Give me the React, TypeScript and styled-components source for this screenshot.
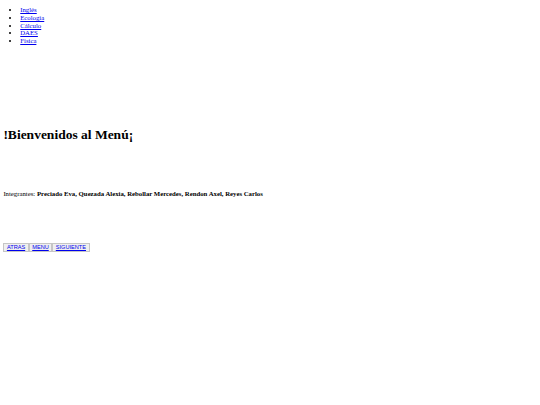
import styled, { createGlobalStyle } from 'styled-components';

// the page was captured at 1280px wide and shrunk to 540px
const S = 0.421875;
const px = (n: number) => `${(n * S).toFixed(2)}px`;

const GlobalStyle = createGlobalStyle`
  html, body {
    margin: 0;
    padding: 0;
    background: #ffffff;
  }

  body {
    padding: ${px(8)};
    font-family: 'Liberation Serif', 'Times New Roman', serif;
    font-size: ${px(16)};
    color: #000000;
  }
`;

const Page = styled.div`
  display: flex;
  flex-direction: column;
  align-items: flex-start;
`;

const SubjectList = styled.ul`
  margin: ${px(7)} 0 0;
  padding-left: ${px(40)};
  line-height: ${px(18.2)};
  list-style: disc;
`;

const SubjectLink = styled.a`
  color: #0000ee;
  text-decoration: underline;
`;

const Title = styled.h1`
  margin: 82.6px 0 0;
  font-size: ${px(32)};
  line-height: ${px(37)};
  font-weight: bold;
`;

const Members = styled.p`
  margin: 46.6px 0 0;
  line-height: ${px(18.4)};
`;

const ButtonRow = styled.div`
  display: flex;
  margin-top: 45.4px;
`;

const NavButton = styled.button`
  display: inline-flex;
  align-items: center;
  margin: 0;
  padding: ${px(1)} ${px(6)};
  height: ${px(21)};
  background: #efefef;
  border: ${px(2)} solid #c5c5c5;
  border-radius: 0;
  font-family: 'Liberation Sans', Arial, sans-serif;
  font-size: ${px(13.33)};
  cursor: pointer;
`;

const ButtonLink = styled.a`
  color: #0000ee;
  text-decoration: underline;
`;

const subjects = ['Inglés', 'Ecología', 'Cálculo', 'DAES', 'Física'];

export default function App() {
  return (
    <>
      <GlobalStyle />
      <Page>
        <SubjectList>
          {subjects.map((s) => (
            <li key={s}>
              <SubjectLink href="#">{s}</SubjectLink>
            </li>
          ))}
        </SubjectList>
        <Title>!Bienvenidos al Menú¡</Title>
        <Members>
          Integrantes: <b>Preciado Eva, Quezada Alexia, Rebollar Mercedes, Rendon Axel, Reyes Carlos</b>
        </Members>
        <ButtonRow>
          <NavButton>
            <ButtonLink href="#">ATRAS</ButtonLink>
          </NavButton>
          <NavButton>
            <ButtonLink href="#">MENU</ButtonLink>
          </NavButton>
          <NavButton>
            <ButtonLink href="#">SIGUIENTE</ButtonLink>
          </NavButton>
        </ButtonRow>
      </Page>
    </>
  );
}
